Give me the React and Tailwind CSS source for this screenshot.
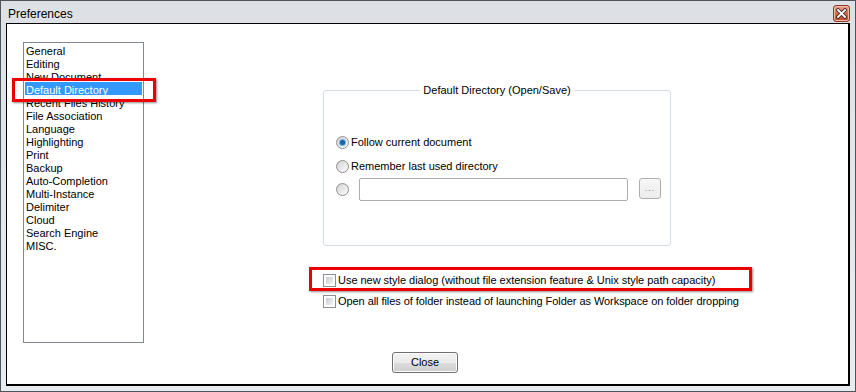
import React from "react";

const items = [
  "General",
  "Editing",
  "New Document",
  "Default Directory",
  "Recent Files History",
  "File Association",
  "Language",
  "Highlighting",
  "Print",
  "Backup",
  "Auto-Completion",
  "Multi-Instance",
  "Delimiter",
  "Cloud",
  "Search Engine",
  "MISC.",
];

function Radio({ checked }) {
  return (
    <span className="w-[13px] h-[13px] shrink-0 rounded-full border border-[#8e8f8f] bg-gradient-to-br from-[#d4d4d4] to-[#fcfcfc] flex items-center justify-center">
      {checked && (
        <span className="w-[5px] h-[5px] rounded-full bg-[#1d65a8] shadow-[0_0_0_1px_#6eaee3]" />
      )}
    </span>
  );
}

function Check() {
  return (
    <span className="w-[13px] h-[13px] shrink-0 border border-[#8e8f8f] bg-white p-[2px] flex">
      <span className="block flex-1 bg-gradient-to-br from-[#c6cad0] to-[#f4f4f4]" />
    </span>
  );
}

export default function App() {
  return (
    <div className="w-[856px] h-[392px] border border-[#4f545a] bg-gradient-to-b from-[#dde1e6] to-[#e9ecef] flex flex-col font-['Liberation_Sans',Arial,sans-serif] text-[11px] text-black overflow-hidden">
      {/* title bar */}
      <div className="h-[22px] shrink-0 flex items-center justify-between pt-[3px] pl-[7px] pr-[5px]">
        <span className="text-[12px] leading-[14px]">Preferences</span>
        <span className="w-[17px] h-[17px] rounded-[3px] border border-[#8a3b28] bg-gradient-to-b from-[#eaa38b] via-[#d7674a] to-[#c7472b] flex items-center justify-center shadow-[inset_0_0_0_1px_#f2b9a6]">
          <svg width="11" height="11" viewBox="0 0 11 11">
            <path d="M2 2 L9 9 M9 2 L2 9" stroke="#3b2a2a" strokeWidth="3.6" strokeLinecap="square" />
            <path d="M2 2 L9 9 M9 2 L2 9" stroke="#ffffff" strokeWidth="1.8" strokeLinecap="square" />
          </svg>
        </span>
      </div>

      {/* client area */}
      <div className="relative flex-1 ml-[5px] mr-[5px] mb-[5px] border-l border-t border-r-2 border-b-2 border-black bg-white flex">
        {/* list box */}
        <div className="ml-[16px] mt-[18px] w-[121px] h-[301px] border border-[#828790] bg-white px-[1px] shrink-0">
          {items.map((it) => (
            <div
              key={it}
              className={
                "h-[13px] leading-[17px] pl-[1px] whitespace-nowrap " +
                (it === "Default Directory" ? "bg-[#3399ff] text-white" : "")
              }
            >
              {it}
            </div>
          ))}
        </div>

        {/* right column */}
        <div className="ml-[179px] flex flex-col">
          {/* group box */}
          <div className="relative mt-[66px] w-[348px] h-[156px] border border-[#d5dfe5] rounded-[3px] flex flex-col pl-[12px]">
            <span className="absolute left-0 right-0 top-[-7px] flex justify-center">
              <span className="bg-white px-[3px] leading-[13px]">Default Directory (Open/Save)</span>
            </span>
            <div className="mt-[43px] h-[16px] flex items-center gap-[2px]">
              <Radio checked />
              <span>Follow current document</span>
            </div>
            <div className="mt-[8px] h-[16px] flex items-center gap-[2px]">
              <Radio />
              <span>Remember last used directory</span>
            </div>
            <div className="mt-[4px] h-[23px] flex items-center">
              <Radio />
              <div className="ml-[10px] w-[269px] h-[23px] border border-[#abadb3] rounded-[2px] bg-white" />
              <div className="ml-[11px] w-[22px] h-[21px] -mt-[2px] border border-[#acb0b4] rounded-[3px] bg-gradient-to-b from-[#f7f7f7] to-[#ececec] flex items-center justify-center text-[#6f7f8f] text-[9px] leading-[9px] tracking-[1px]">
                ...
              </div>
            </div>
          </div>

          {/* checkboxes */}
          <div className="mt-[26px] h-[16px] flex items-center gap-[2px] whitespace-nowrap">
            <Check />
            <span className="tracking-[-0.03px]">Use new style dialog (without file extension feature &amp; Unix style path capacity)</span>
          </div>
          <div className="mt-[5px] h-[16px] flex items-center gap-[2px] whitespace-nowrap">
            <Check />
            <span className="tracking-[-0.06px]">Open all files of folder instead of launching Folder as Workspace on folder dropping</span>
          </div>

          {/* close button */}
          <div className="mt-[43px] ml-[69px] w-[66px] h-[21px] border border-[#707070] rounded-[3px] bg-[linear-gradient(#f2f2f2_0%,#ebebeb_50%,#dddddd_50%,#cfcfcf_100%)] shadow-[inset_0_0_0_1px_#fcfcfc] flex items-center justify-center">
            Close
          </div>
        </div>

        {/* red annotation boxes */}
        <div className="absolute left-[5px] top-[54px] w-[144px] h-[24px] border-[3px] border-[#ee0000] shadow-[1px_1px_2px_rgba(0,0,0,0.45)]" />
        <div className="absolute left-[302px] top-[243px] w-[443px] h-[24px] border-[3px] border-[#ee0000] shadow-[1px_1px_2px_rgba(0,0,0,0.45)]" />
      </div>
    </div>
  );
}
